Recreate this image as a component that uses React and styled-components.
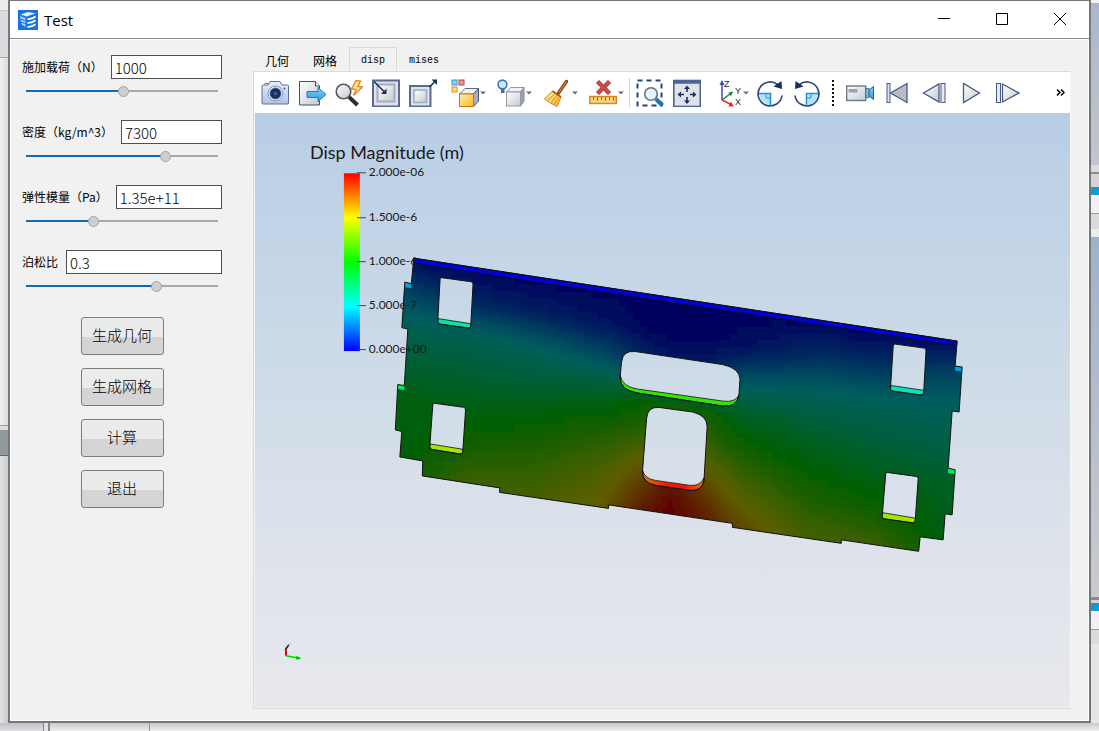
import React, { useState } from 'react';
import styled, { createGlobalStyle, css } from 'styled-components';

const GlobalStyle = createGlobalStyle`
  * {
    box-sizing: border-box;
  }

  body {
    margin: 0;
    font-family: 'Noto Sans CJK SC', sans-serif;
    color: #000;
  }
`;

const Desktop = styled.div`
  display: grid;
  grid-template-columns: 8px minmax(0, 1fr) 8px;
  grid-template-rows: minmax(0, 1fr) 8px;
  height: 100vh;
  background: #e4e4e5;
`;

const Strip = styled.div`
  display: flex;
  flex-direction: column;
  overflow: hidden;
`;

const BottomStrip = styled.div`
  grid-column: 1 / -1;
  display: flex;
  background: linear-gradient(#c6c8ca, #e9e9ea);
`;

const Segment = styled.div`
  flex: ${({ $size }) => ($size ? `0 0 ${$size}px` : '1')};
  background: ${({ $fill }) => $fill};
`;

const Window = styled.main`
  display: flex;
  flex-direction: column;
  min-width: 0;
  background: #f1f1f1;
  border: 2px solid #74787c;
  border-top-width: 1px;
`;

const TitleBar = styled.header`
  display: flex;
  align-items: center;
  height: 38px;
  padding-left: 8px;
  background: #fff;
  border-bottom: 1px solid #858a90;
`;

const Title = styled.h1`
  flex: 1;
  margin: 0 0 0 6px;
  font: 400 15px/20px 'Open Sans', sans-serif;
`;

const WindowButton = styled.button`
  display: flex;
  align-items: center;
  justify-content: center;
  width: 58px;
  height: 36px;
  padding: 0 0 2px;
  background: none;
  border: none;

  &:hover {
    background: #e5e5e5;
  }
`;

const Body = styled.div`
  flex: 1;
  display: flex;
  min-height: 0;
  padding: 7px 17px 11px 0;
  border: 1px solid #fff;
`;

const Sidebar = styled.aside`
  flex: 0 0 242px;
  min-width: 0;
  padding: 8px 31px 0 11px;
`;

const Field = styled.div`
  margin-bottom: 17px;
`;

const FieldRow = styled.div`
  display: flex;
  align-items: center;
  gap: 8px;
`;

const Label = styled.label`
  font-size: 12px;
  line-height: 24px;
  white-space: nowrap;
`;

const TextInput = styled.input`
  flex: 1;
  min-width: 0;
  height: 24px;
  padding: 1px 3px 0;
  font: 300 15px/20px 'Noto Sans CJK SC', sans-serif;
  color: #000;
  background: #fff;
  border: 1px solid #4f4f52;
  outline: none;
`;

const thumb = css`
  width: 11px;
  height: 11px;
  background: #cfcfcf;
  border: 1px solid #a3a3a3;
  border-radius: 50%;
`;

const Slider = styled.input`
  display: block;
  width: calc(100% - 8px);
  height: 24px;
  margin: 0 4px;
  appearance: none;
  background: transparent;

  &::-webkit-slider-runnable-track {
    height: 2px;
    background: linear-gradient(to right, #0a6cbc var(--fill), #a9a9a9 var(--fill));
  }

  &::-webkit-slider-thumb {
    appearance: none;
    margin-top: -4px;
    ${thumb}
  }

  &::-moz-range-thumb {
    ${thumb}
  }
`;

const Actions = styled.div`
  display: flex;
  flex-direction: column;
  align-items: center;
  gap: 13px;
  padding-top: 2px;
`;

const ActionButton = styled.button`
  width: 83px;
  height: 38px;
  padding: 0 0 2px;
  font: 300 15px/20px 'Noto Sans CJK SC', sans-serif;
  color: #000;
  background: linear-gradient(#ebebeb 53%, #d5d5d5 53%);
  border: 1px solid #7d7d7d;
  border-radius: 3px;
`;

const Viewer = styled.section`
  flex: 1;
  display: flex;
  flex-direction: column;
  min-width: 0;
`;

const Tabs = styled.div`
  display: flex;
  height: 24px;
`;

const Tab = styled.button`
  padding: 2px 11px 0;
  font-family: ${({ $latin }) => ($latin ? "'Liberation Mono', monospace" : "'Noto Sans CJK SC', sans-serif")};
  font-size: ${({ $latin }) => ($latin ? '10px' : '12px')};
  line-height: 20px;
  color: #000;
  background: none;
  border: 1px solid ${({ $active }) => ($active ? '#d9d9d9' : 'transparent')};
  border-bottom: none;
`;

const TabPanel = styled.div`
  flex: 1;
  display: flex;
  flex-direction: column;
  min-height: 0;
  border: 1px solid #dadada;
  border-right-color: #f7f7f7;
`;

const Toolbar = styled.div`
  display: flex;
  align-items: center;
  height: 41px;
  padding: 0 2px;
  background: #fff;
`;

const ToolButton = styled.button`
  flex: none;
  display: flex;
  align-items: center;
  justify-content: ${({ $menu }) => ($menu ? 'flex-start' : 'center')};
  gap: 1px;
  width: ${({ $menu }) => ($menu ? 46 : 37)}px;
  height: 36px;
  padding: ${({ $menu }) => ($menu ? '0 0 0 7px' : '0')};
  background: none;
  border: none;

  &:hover {
    background: #e6f1fb;
  }
`;

const ToolGroup = styled.div`
  display: flex;
  margin-left: ${({ $offset }) => $offset || 0}px;
`;

const Separator = styled.div`
  width: 1px;
  height: 30px;
  margin: 0 1px;
  background: #d5d5d5;
`;

const DottedSeparator = styled.div`
  height: 26px;
  margin: 0 7px;
  border-left: 2px dotted #111;
`;

const MoreButton = styled.button`
  margin-left: auto;
  padding: 8px 3px;
  line-height: 0;
  background: none;
  border: none;
`;

const Viewport = styled.div`
  flex: 1;
  min-height: 0;
  margin: 0 0 1px 1px;
  background: linear-gradient(#b8cde5, #cfdce8 46%, #dbe1ea 68%, #e8e9ed);

  svg {
    display: block;
    width: 100%;
    height: 100%;
  }
`;

const Icon = ({ children, size = 28 }) => (
  <svg width={size} height={size} viewBox={`0 0 ${size} ${size}`} fill="none" aria-hidden="true">
    {children}
  </svg>
);

const DropArrow = () => (
  <svg width="6" height="4" viewBox="0 0 6 4" aria-hidden="true">
    <path d="M0 0.500h6L3 3.500z" fill="#6c6c6c" />
  </svg>
);

const HiddenSvg = styled.svg`
  display: block;
`;

const ToolDefs = () => (
  <HiddenSvg width="0" height="0" aria-hidden="true">
    <defs>
      <linearGradient id="steel" x1="0" y1="0" x2="1" y2="1">
        <stop offset="0" stopColor="#fff" />
        <stop offset="1" stopColor="#c3c9d2" />
      </linearGradient>
      <linearGradient id="sky" x1="0" y1="0" x2="0" y2="1">
        <stop offset="0" stopColor="#7fd0f5" />
        <stop offset="1" stopColor="#2a9fe0" />
      </linearGradient>
      <linearGradient id="gold" x1="0" y1="0" x2="1" y2="1">
        <stop offset="0" stopColor="#fff0b0" />
        <stop offset="1" stopColor="#fbb820" />
      </linearGradient>
      <linearGradient id="body" x1="0" y1="0" x2="0" y2="1">
        <stop offset="0" stopColor="#e6eefa" />
        <stop offset="1" stopColor="#aec4e4" />
      </linearGradient>
    </defs>
  </HiddenSvg>
);

const icons = {
  camera: (
    <>
      <path d="M1 7q0-1 1-1h5l2-3.500h10L21 6h5.500q1 0 1 1v17q0 1-1 1H2q-1 0-1-1z" fill="url(#body)" stroke="#5c7299" />
      <path d="M4 6V4.500h3V6" fill="#dfe8f5" stroke="#5c7299" />
      <circle cx="14.500" cy="14.500" r="7.500" fill="#eef3fa" stroke="#8093b5" />
      <circle cx="14.500" cy="14.500" r="5.500" fill="#16305f" stroke="#4a6596" />
      <circle cx="14.500" cy="14.500" r="2" fill="#3a5890" />
      <circle cx="23.500" cy="9.500" r="1" fill="#3a5890" />
    </>
  ),
  exportView: (
    <>
      <path d="M1.500 2.500h16l4 4.500v19h-20z" fill="url(#steel)" stroke="#4e4e52" />
      <path d="M17.500 2.500V7h4" fill="#fff" stroke="#4e4e52" />
      <path d="M9 12.500h11V8.500l8 7-8 7V18.500H9z" fill="url(#sky)" stroke="#1b7fc0" />
    </>
  ),
  quickZoom: (
    <>
      <path d="M14 18l8.500 8" stroke="#2d2d30" strokeWidth="4" />
      <circle cx="8.500" cy="12.500" r="7.300" fill="url(#steel)" stroke="#57575c" strokeWidth="1.600" />
      <path d="M21 1.500l-4.500 8.500 4.500 .5-2.500 6L27.500 8l-4.500-.5L25.500 2z" fill="#fde39a" stroke="#e8871e" strokeWidth="1.400" />
    </>
  ),
  fitInside: (
    <>
      <rect x="1" y="1.500" width="26" height="26" fill="#dfe2e8" stroke="#5a6b92" strokeWidth="2" />
      <rect x="5.500" y="5.500" width="17" height="17" fill="url(#steel)" stroke="#a4adbd" strokeWidth="2" />
      <path d="M2 2.500l10.500 10.500" stroke="#1c2f5c" strokeWidth="1.600" />
      <path d="M14.500 15V9.500L9 15z" fill="#1c2f5c" />
    </>
  ),
  fitOutside: (
    <>
      <rect x="1" y="7" width="20.500" height="20.500" fill="#dfe2e8" stroke="#5a6b92" strokeWidth="2" />
      <rect x="5" y="11" width="12.500" height="12.500" fill="url(#steel)" stroke="#a4adbd" strokeWidth="1.600" />
      <path d="M20.500 8L26 2.500" stroke="#1c2f5c" strokeWidth="1.600" />
      <path d="M28 .5v5.500L22.500 .5z" fill="#1c2f5c" />
    </>
  ),
  cubeColors: (
    <>
      <rect x="1" y="1" width="5" height="5" fill="#7fd4f5" stroke="#3b93c8" />
      <rect x="8" y="1" width="5" height="5" fill="#e59a9a" stroke="#a84848" />
      <rect x="1" y="8" width="5" height="5" fill="#ffd684" stroke="#e09020" />
      <path d="M8.500 15l5.500-5.500h14L22.500 15z" fill="#eef1f6" stroke="#646a76" />
      <path d="M22.500 15l5-5.500v12.500l-5 5.500z" fill="#a9b0bd" stroke="#4c5568" />
      <rect x="8.500" y="15" width="14" height="12.500" fill="url(#gold)" stroke="#c07818" />
    </>
  ),
  cubeLight: (
    <>
      <circle cx="5.500" cy="5.500" r="4.400" fill="#cbe7f9" stroke="#3a76ae" strokeWidth="1.600" />
      <path d="M4 10h3.500v4H4z" fill="#5d6d80" />
      <path d="M9.500 13l4-4.500h13.500l-3.500 4.500z" fill="#eef1f4" stroke="#9098a3" />
      <path d="M23.500 13L27 8.500V22l-3.500 5z" fill="#9ca3ae" stroke="#858d99" />
      <rect x="9.500" y="13" width="14" height="14" fill="url(#steel)" stroke="#949ba6" />
    </>
  ),
  broom: (
    <>
      <path d="M23.500 2.500L15.500 14" stroke="#7e3e12" strokeWidth="3.400" strokeLinecap="round" />
      <path d="M23.500 2.500L15.500 14" stroke="#c87a35" strokeWidth="1.400" />
      <path d="M9.500 12l8.500 6-4 9.500Q7 24 1.500 20z" fill="url(#gold)" stroke="#cf7c12" />
      <path d="M5 21l6.500-6M8.500 23.500l5-7M11.500 25l4-7" stroke="#d88a18" />
      <path d="M9.500 12l8.500 6" stroke="#a55a10" strokeWidth="1.600" />
    </>
  ),
  clearRuler: (
    <>
      <path d="M8.500 2.500l12 12M20.500 2.500l-12 12" stroke="#a03a3e" strokeWidth="4.400" />
      <path d="M8.500 2.500l12 12M20.500 2.500l-12 12" stroke="#cf4a4d" strokeWidth="2.600" />
      <rect x=".8" y="17.500" width="26.500" height="7" fill="#fbd583" stroke="#d98319" strokeWidth="1.400" />
      <path d="M4.500 18v3M8.500 18v4M12.500 18v3M16.500 18v4M20.500 18v3M24.500 18v4" stroke="#b5670f" />
    </>
  ),
  zoomBox: (
    <>
      <rect x="1.500" y="1.500" width="24" height="25" stroke="#27407c" strokeWidth="2" strokeDasharray="5 4" />
      <path d="M20 20l6.500 6.500" stroke="#1b76b5" strokeWidth="4" />
      <circle cx="15" cy="15" r="6.300" fill="#e4f3fc" stroke="#67717f" strokeWidth="1.600" />
    </>
  ),
  panWindow: (
    <>
      <rect x=".8" y="1.500" width="26.500" height="26" fill="#dfe2e8" stroke="#50638f" strokeWidth="1.600" />
      <path d="M1 3h26" stroke="#4e6294" strokeWidth="3.500" />
      <path d="M14 9v4M14 18v5M6 15.500h5M17 15.500h5" stroke="#1c2f5c" strokeWidth="1.600" />
      <path d="M14 6.500l3 3.500h-6zM14 25l3-3.500h-6zM4.500 15.500l3.500-3v6zM23.500 15.500l-3.500-3v6z" fill="#1c2f5c" />
    </>
  ),
  axes: (
    <>
      <path d="M10 22V6" stroke="#3453a8" strokeWidth="1.500" />
      <path d="M10 2l2.500 5h-5z" fill="#3453a8" />
      <path d="M10 22l8-6" stroke="#1d8a3c" strokeWidth="1.500" />
      <path d="M21 13.500l-1.800 4.800-3-3.800z" fill="#1d8a3c" />
      <path d="M10 22l8 4" stroke="#e22" strokeWidth="1.500" />
      <path d="M22 28.500l-5.500-.2 2.400-4.500z" fill="#e22" />
      <text x="12" y="9" fontFamily="Liberation Sans, sans-serif" fontSize="9" fill="#222">Z</text>
      <text x="23" y="16" fontFamily="Liberation Sans, sans-serif" fontSize="9" fill="#222">Y</text>
      <text x="23" y="27" fontFamily="Liberation Sans, sans-serif" fontSize="9" fill="#222">X</text>
    </>
  ),
  rotateRight: (
    <>
      <path d="M3.500 14.500h10.500V26Q4.500 25 3.500 14.500z" fill="#b3e2fa" />
      <path d="M2 14.500h12.500v12" stroke="#1f95d5" strokeWidth="1.600" />
      <path d="M10 15v4h4" stroke="#1f95d5" />
      <path d="M21.500 5.500A12 12 0 1 0 26 16.500" stroke="#2f4878" strokeWidth="1.700" />
      <path d="M17.500 7.500l8-5.500.5 8z" fill="#1c2f5c" />
    </>
  ),
  rotateLeft: (
    <>
      <path d="M25 14.500H14.500V26Q24 25 25 14.500z" fill="#b3e2fa" />
      <path d="M26 14.500H13.500v12" stroke="#1f95d5" strokeWidth="1.600" />
      <path d="M18 15v4h-4" stroke="#1f95d5" />
      <path d="M6.500 5.500A12 12 0 1 1 2 16.500" stroke="#2f4878" strokeWidth="1.700" />
      <path d="M10.500 7.500L2.500 2 2 10z" fill="#1c2f5c" />
    </>
  ),
  record: (
    <>
      <rect x=".7" y="7" width="19" height="14.500" fill="url(#steel)" stroke="#6c7a92" strokeWidth="1.400" />
      <rect x="2.500" y="10" width="9" height="3.500" fill="#9aa1ab" />
      <path d="M20 9.500h3v9h-3z" fill="#8fd0f0" stroke="#3d6f9a" />
      <path d="M23 11l4.500-3.500v13L23 17z" fill="url(#sky)" stroke="#2d5a86" />
    </>
  ),
  first: (
    <>
      <rect x="4" y="4.500" width="3" height="19" fill="#dfe4ec" stroke="#475b84" />
      <path d="M24 4.500v19L7.500 14z" fill="#b7bcc5" stroke="#475b84" strokeWidth="1.300" />
    </>
  ),
  stepBack: (
    <>
      <path d="M19 5v18L3.500 14z" fill="url(#steel)" stroke="#475b84" strokeWidth="1.300" />
      <rect x="21" y="4.500" width="4" height="19" fill="#e6eaf1" stroke="#475b84" />
    </>
  ),
  play: <path d="M6.500 4.500v19L22.500 14z" fill="url(#steel)" stroke="#475b84" strokeWidth="1.300" />,
  stepForward: (
    <>
      <rect x="2.500" y="4.500" width="4" height="19" fill="#e6eaf1" stroke="#475b84" />
      <path d="M8.500 5v18L25 14z" fill="url(#steel)" stroke="#475b84" strokeWidth="1.300" />
    </>
  ),
};

const Tool = ({ name, label, menu, size }) => (
  <ToolButton $menu={menu} aria-label={label}>
    <Icon size={size}>{icons[name]}</Icon>
    {menu && <DropArrow />}
  </ToolButton>
);

const Logo = () => (
  <Icon size={20}>
    <rect width="20" height="20" fill="#1673e6" />
    <path d="M2.500 4.500L10 2l7.500 1.500L8.500 6.500z" fill="#e6f0fd" />
    <path d="M2 6l5.500 2v9L3.500 14.500z" fill="#a9ccf8" />
    <path d="M2.500 9l5 1.800M3 12l4.500 1.700" stroke="#1673e6" strokeWidth="1" />
    <path d="M9.500 9q4 .5 8-2.500M9.500 12.800q4 .5 8-2.500M9.500 16.800q4 .5 8-2.500" stroke="#fff" strokeWidth="1.700" />
  </Icon>
);

// Displacement samples over the plate, 0 = fixed edge, 1 = maximum
const FIELD_S = [0, 0.125, 0.25, 0.375, 0.44, 0.5, 0.56, 0.625, 0.75, 0.875, 1];
const FIELD_T = [0, 0.18, 0.36, 0.54, 0.72, 0.9, 1.08];
const FIELD = [
  [0.02, 0, 0, 0, 0, 0, 0, 0, 0, 0, 0.02],
  [0.18, 0.1, 0.08, 0.05, 0.01, 0, 0.01, 0.04, 0.12, 0.13, 0.19],
  [0.3, 0.29, 0.26, 0.2, 0.12, 0.08, 0.12, 0.22, 0.26, 0.27, 0.27],
  [0.38, 0.37, 0.37, 0.43, 0.5, 0.54, 0.52, 0.42, 0.37, 0.34, 0.32],
  [0.46, 0.46, 0.51, 0.58, 0.64, 0.74, 0.65, 0.56, 0.48, 0.43, 0.41],
  [0.45, 0.56, 0.6, 0.7, 0.81, 0.95, 0.82, 0.7, 0.58, 0.54, 0.44],
  [0.5, 0.66, 0.68, 0.76, 0.92, 1, 0.94, 0.82, 0.68, 0.66, 0.5],
];
const CELL = 7;

const locate = (axis, value) => {
  const v = Math.min(Math.max(value, axis[0]), axis[axis.length - 1]);
  let i = 0;
  while (i < axis.length - 2 && v > axis[i + 1]) i += 1;
  return [i, (v - axis[i]) / (axis[i + 1] - axis[i])];
};

const sampleField = (x, y) => {
  const s = ((x - 413) * 199 + (y - 258) * 14) / (545 * 199 + 83 * 14);
  const t = (y - 258 - 83 * s) / 199;
  const [i, a] = locate(FIELD_S, s);
  const [j, b] = locate(FIELD_T, t);
  const top = FIELD[j][i] * (1 - a) + FIELD[j][i + 1] * a;
  const bottom = FIELD[j + 1][i] * (1 - a) + FIELD[j + 1][i + 1] * a;
  return top * (1 - b) + bottom * b;
};

const cells = [];
for (let y = 250; y < 560; y += CELL) {
  for (let x = 388; x < 972; x += CELL) {
    const hue = 240 * (1 - sampleField(x + CELL / 2, y + CELL / 2));
    cells.push({ x, y, fill: `hsl(${Math.round(hue)} 100% 18.5%)` });
  }
}

const OUTLINE =
  'M414 258L958 341L956 366L963 367L960 412L953 411L949 468L956 470L953 515L946 514L944 540L921 537L919.500 551.500L842 540L842 543.500L733 527.500V523.500L609 505V508.500L500 492.500V488L422.500 476L423 461L400 457L402 431.500L395.500 430L398 384.500L404.500 385.500L408 329L402 327.500L405 282L411.500 283.500Z';

// Each cut-out: its opening, the visible lower lip and the lip colour
const HOLES = [
  {
    open: 'M442 277.500L471 281.500Q473.500 282 473.300 284L471 326Q471 328.500 468.500 328L440 324Q437.700 323.500 438 321L440.300 279Q440.500 277.300 442 277.500Z',
    lip: 'M438.300 318.500L470.500 323.500L471 326Q471 328.500 468.500 328L440 324Q437.700 323.500 438 321Z',
    fill: '#00e8a8',
  },
  {
    open: 'M435 403.300L464 407.300Q466 407.700 465.800 410L463 452Q462.500 454.500 460 454L432 449.500Q429.700 449 430 446.500L433 405Q433.200 403.200 435 403.300Z',
    lip: 'M430.700 444L463 449.300V452Q462.500 454.500 460 454L432 449.500Q429.700 449 430 446.500Z',
    fill: '#a0e800',
  },
  {
    open: 'M896 344L925 348Q927 348.500 926.800 351L924.500 393Q924 395.500 921.500 395L893 391Q891 390.500 891.300 388L894 346Q894.200 344 896 344Z',
    lip: 'M892 385.500L924.500 390.300V393Q924 395.500 921.500 395L893 391Q891 390.500 891.300 388Z',
    fill: '#00e8b8',
  },
  {
    open: 'M888 472.500L917 476.500Q919.200 477 919 479L916 521Q915.700 523.300 913.500 523L885 519Q882.500 518.500 883 516L886.500 474Q886.700 472.300 888 472.500Z',
    lip: 'M883.500 512.800L916.300 518.300L916 521Q915.700 523.300 913.500 523L885 519Q882.500 518.500 883 516Z',
    fill: '#a0e800',
  },
  {
    open: 'M622 362Q623 350 636 351.500L723 364.500Q740 368 740.600 379L739.500 395Q738 407.500 723 406L638 393Q620 390 620.500 377Z',
    lip: 'M620.500 375Q623 387 638 389L723 401Q736 403 739.500 395Q738 407.500 723 406L638 393Q620 390 620.500 377Z',
    fill: '#2ee800',
  },
  {
    open: 'M647 419Q648 406 660 407.500L693 412Q708 415.500 707.700 427L704.500 481Q702 491.500 691 490.500L656 485.500Q642 482.500 643 471Z',
    lip: 'M643 470Q645 479 656 480.500L691 485.500Q701 486 704.500 478V481Q702 491.500 691 490.500L656 485.500Q642 482.500 643 471Z',
    fill: 'url(#hotLip)',
  },
];

const TICKS = [
  { y: 173, text: '2.000e-06' },
  { y: 218, text: '1.500e-6' },
  { y: 262, text: '1.000e-6' },
  { y: 306, text: '5.000e-7' },
  { y: 350, text: '0.000e+00' },
];

const ResultPlot = () => (
  <svg viewBox="255 113 816 594" role="img" aria-label="Disp Magnitude">
    <defs>
      <linearGradient id="rainbow" x1="0" y1="0" x2="0" y2="1">
        <stop offset="0" stopColor="#f00" />
        <stop offset=".25" stopColor="#ff0" />
        <stop offset=".5" stopColor="#0f0" />
        <stop offset=".75" stopColor="#0ff" />
        <stop offset="1" stopColor="#00f" />
      </linearGradient>
      <linearGradient id="hotLip">
        <stop offset="0" stopColor="#e07800" />
        <stop offset=".4" stopColor="#f01800" />
        <stop offset=".7" stopColor="#f01800" />
        <stop offset="1" stopColor="#e07800" />
      </linearGradient>
      <filter id="smooth" x="0" y="0" width="1" height="1">
        <feGaussianBlur stdDeviation="5" />
      </filter>
      <clipPath id="plate">
        <path d={OUTLINE + HOLES.map((hole) => hole.open).join('')} clipRule="evenodd" />
      </clipPath>
    </defs>

    <g clipPath="url(#plate)">
      <g filter="url(#smooth)" shapeRendering="crispEdges">
        {cells.map((cell) => (
          <rect key={`${cell.x}-${cell.y}`} x={cell.x} y={cell.y} width={CELL} height={CELL} fill={cell.fill} />
        ))}
      </g>
    </g>
    <path d="M414 258L958 341L957.500 345.500L414 263Z" fill="#0000dc" stroke="#111" strokeWidth=".8" />
    <path d="M405 282l6.500 1.500v4.500L405 287z" fill="#00a4d6" />
    <path d="M956 366l7 1v4.500l-7-1z" fill="#00a4d6" />
    <path d="M398 384.500l6.500 1v4.500L398 389z" fill="#00ec5c" />
    <path d="M949 468.500l7 1.500v4l-7-1z" fill="#00ec5c" />
    <path d={OUTLINE} fill="none" stroke="#111" strokeWidth="1" />
    {HOLES.map((hole) => (
      <g key={hole.open} stroke="#111">
        <path d={hole.lip} fill={hole.fill} strokeWidth=".8" />
        <path d={hole.open} fill="none" strokeWidth="1" />
      </g>
    ))}

    <rect x="344" y="173" width="16" height="178" fill="url(#rainbow)" />
    <g fontFamily="Lato, sans-serif" fill="#1a1a1a">
      <text x="310" y="159" fontSize="18">Disp Magnitude (m)</text>
      {TICKS.map((tick) => (
        <g key={tick.text}>
          <path d={`M357 ${tick.y - 0.5}h9`} stroke="#444" />
          <text x="369" y={tick.y + 3} fontSize="12">{tick.text}</text>
        </g>
      ))}
    </g>

    <path d="M286 656V648" stroke="#d00" strokeWidth="2" />
    <path d="M286 649l3-4" stroke="#301040" strokeWidth="1.500" />
    <path d="M289 646l2-3" stroke="#c4c4f4" />
    <path d="M286 656l11 2" stroke="#0d0" strokeWidth="1.500" />
    <path d="M296 656l6 2.500-6 1.500z" fill="#0d0" />
    <path d="M298 657.500v2" stroke="#060" />
  </svg>
);

const PARAMETERS = [
  { id: 'load', label: '施加载荷（N）', value: '1000', position: 51 },
  { id: 'density', label: '密度（kg/m^3）', value: '7300', position: 74 },
  { id: 'modulus', label: '弹性模量（Pa）', value: '1.35e+11', position: 34 },
  { id: 'poisson', label: '泊松比', value: '0.3', position: 69 },
];

const ParameterField = ({ id, label, value, position }) => {
  const [text, setText] = useState(value);
  const [slider, setSlider] = useState(position);

  return (
    <Field>
      <FieldRow>
        <Label htmlFor={id}>{label}</Label>
        <TextInput id={id} value={text} onChange={(e) => setText(e.target.value)} />
      </FieldRow>
      <Slider
        type="range"
        aria-label={label}
        value={slider}
        style={{ '--fill': `${slider}%` }}
        onChange={(e) => setSlider(e.target.value)}
      />
    </Field>
  );
};

const TABS = ['几何', '网格', 'disp', 'mises'];

const App = () => {
  const [activeTab, setActiveTab] = useState('disp');

  return (
    <>
      <GlobalStyle />
      <ToolDefs />
      <Desktop>
        <Strip>
          <Segment $size={10} $fill="#ededed" />
          <Segment $size={1} $fill="#c4c4c4" />
          <Segment $size={46} $fill="#dadcdf" />
          <Segment $size={1} $fill="#a5a5a5" />
          <Segment $size={367} $fill="linear-gradient(to right, #f2f2f2, #dcdcdc)" />
          <Segment $size={1} $fill="#999" />
          <Segment $size={4} $fill="#dcdcdc" />
          <Segment $size={25} $fill="#94999b" />
          <Segment $size={1} $fill="#666" />
          <Segment $fill="linear-gradient(to right, #e0e2e4, #c9ccce)" />
        </Strip>
        <Window>
          <TitleBar>
            <Logo />
            <Title>Test</Title>
            <WindowButton aria-label="Minimize">
              <svg width="12" height="12" viewBox="0 0 12 12"><path d="M0 5.500h12" stroke="#000" /></svg>
            </WindowButton>
            <WindowButton aria-label="Maximize">
              <svg width="12" height="12" viewBox="0 0 12 12"><path d="M.5 .5h11v11H.5z" fill="none" stroke="#000" /></svg>
            </WindowButton>
            <WindowButton aria-label="Close">
              <svg width="12" height="12" viewBox="0 0 12 12"><path d="M0 0l12 12M12 0L0 12" stroke="#000" /></svg>
            </WindowButton>
          </TitleBar>
          <Body>
            <Sidebar>
              {PARAMETERS.map((parameter) => (
                <ParameterField key={parameter.id} {...parameter} />
              ))}
              <Actions>
                <ActionButton>生成几何</ActionButton>
                <ActionButton>生成网格</ActionButton>
                <ActionButton>计算</ActionButton>
                <ActionButton>退出</ActionButton>
              </Actions>
            </Sidebar>
            <Viewer>
              <Tabs role="tablist">
                {TABS.map((tab) => (
                  <Tab
                    key={tab}
                    role="tab"
                    aria-selected={tab === activeTab}
                    $active={tab === activeTab}
                    $latin={/^[a-z]/.test(tab)}
                    onClick={() => setActiveTab(tab)}
                  >
                    {tab}
                  </Tab>
                ))}
              </Tabs>
              <TabPanel>
                <Toolbar>
                  <ToolGroup>
                    <Tool name="camera" label="Snapshot" />
                    <Tool name="exportView" label="Export" />
                    <Tool name="quickZoom" label="Quick zoom" />
                    <Tool name="fitInside" label="Zoom in to data" />
                    <Tool name="fitOutside" label="Zoom out to data" />
                  </ToolGroup>
                  <ToolGroup $offset={3}>
                    <Tool name="cubeColors" label="Colouring" menu />
                    <Tool name="cubeLight" label="Lighting" menu />
                    <Tool name="broom" label="Clean" menu />
                    <Tool name="clearRuler" label="Remove measurement" menu />
                  </ToolGroup>
                  <Separator />
                  <ToolGroup>
                    <Tool name="zoomBox" label="Zoom to box" />
                    <Tool name="panWindow" label="Fit window" />
                    <Tool name="axes" label="View direction" size={30} menu />
                    <Tool name="rotateRight" label="Rotate clockwise" />
                    <Tool name="rotateLeft" label="Rotate counterclockwise" />
                  </ToolGroup>
                  <DottedSeparator />
                  <ToolGroup>
                    <Tool name="record" label="Record" />
                    <Tool name="first" label="First frame" />
                    <Tool name="stepBack" label="Step back" />
                    <Tool name="play" label="Play" />
                    <Tool name="stepForward" label="Step forward" />
                  </ToolGroup>
                  <MoreButton aria-label="More">
                    <svg width="9" height="7" viewBox="0 0 9 7" fill="none">
                      <path d="M1 .5l3 3-3 3M5 .5l3 3-3 3" stroke="#000" strokeWidth="1.500" />
                    </svg>
                  </MoreButton>
                </Toolbar>
                <Viewport>
                  <ResultPlot />
                </Viewport>
              </TabPanel>
            </Viewer>
          </Body>
        </Window>
        <Strip>
          <Segment $size={3} $fill="#f4f4f4" />
          <Segment $size={162} $fill="linear-gradient(#a9b8cc, #c3c6cb)" />
          <Segment $size={7} $fill="#dcdcdc" />
          <Segment $size={2} $fill="#8a8a8a" />
          <Segment $size={13} $fill="#d4d4d4" />
          <Segment $size={8} $fill="#109bd8" />
          <Segment $size={18} $fill="#f1f1f1" />
          <Segment $size={1} $fill="#9a9aa2" />
          <Segment $size={15} $fill="#dcdcdc" />
          <Segment $size={8} $fill="#ececec" />
          <Segment $size={360} $fill="linear-gradient(#9fb2ca, #cbcbce)" />
          <Segment $size={3} $fill="#8a8a8a" />
          <Segment $size={3} $fill="#d4d4d4" />
          <Segment $size={8} $fill="#109bd8" />
          <Segment $size={18} $fill="#f1f1f1" />
          <Segment $size={1} $fill="#9a9aa2" />
          <Segment $size={14} $fill="#dcdcdc" />
          <Segment $fill="#e6e6e6" />
        </Strip>
        <BottomStrip>
          <Segment $size={43} $fill="linear-gradient(#bfc1c4, #dddfe2)" />
          <Segment $size={1} $fill="#888" />
          <Segment $size={4} $fill="#e2e2e2" />
          <Segment $size={2} $fill="#888" />
          <Segment $size={99} $fill="linear-gradient(#c9c9c9, #eee)" />
          <Segment $size={1} $fill="#999" />
          <Segment $fill="linear-gradient(#c9c9c9, #eee)" />
        </BottomStrip>
      </Desktop>
    </>
  );
};

export default App;
